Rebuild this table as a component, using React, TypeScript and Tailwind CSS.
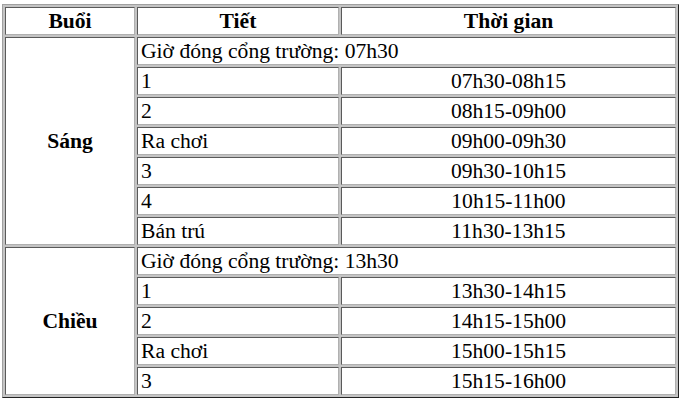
import React from "react";

type Row = { tiet: string; time?: string; note?: boolean };

const sessions: { name: string; rows: Row[] }[] = [
  {
    name: "Sáng",
    rows: [
      { tiet: "Giờ đóng cổng trường: 07h30", note: true },
      { tiet: "1", time: "07h30-08h15" },
      { tiet: "2", time: "08h15-09h00" },
      { tiet: "Ra chơi", time: "09h00-09h30" },
      { tiet: "3", time: "09h30-10h15" },
      { tiet: "4", time: "10h15-11h00" },
      { tiet: "Bán trú", time: "11h30-13h15" },
    ],
  },
  {
    name: "Chiều",
    rows: [
      { tiet: "Giờ đóng cổng trường: 13h30", note: true },
      { tiet: "1", time: "13h30-14h15" },
      { tiet: "2", time: "14h15-15h00" },
      { tiet: "Ra chơi", time: "15h00-15h15" },
      { tiet: "3", time: "15h15-16h00" },
    ],
  },
];

// inset-looking cell border, like an old border="1" table
const cell =
  "border border-t-[#5a5a5a] border-l-[#5a5a5a] border-b-[#b0b0b0] border-r-[#b0b0b0] p-0 h-[28px] leading-[26px]";

export default function App() {
  return (
    <div className="bg-white w-[680px] h-[407px] pt-[4px] pl-[2px] [font-family:Liberation_Serif,serif]">
      <table className="border-separate border-spacing-[2px] w-[677px] table-fixed bg-[#c4c4c4] border border-t-[#a0a0a0] border-l-[#a0a0a0] border-b-[#222] border-r-[#222] text-black text-[21.6px]">
        <colgroup>
          <col className="w-[130px]" />
          <col className="w-[202px]" />
          <col className="w-[335px]" />
        </colgroup>
        <thead>
          <tr>
            <th className={`${cell} bg-white font-bold text-center`}>Buổi</th>
            <th className={`${cell} bg-white font-bold text-center`}>Tiết</th>
            <th className={`${cell} bg-white font-bold text-center`}>Thời gian</th>
          </tr>
        </thead>
        <tbody>
          {sessions.map((s) =>
            s.rows.map((r, i) => (
              <tr key={s.name + i}>
                {i === 0 && (
                  <td
                    rowSpan={s.rows.length}
                    className={`${cell} bg-white font-bold text-center align-middle`}
                  >
                    {s.name}
                  </td>
                )}
                {r.note ? (
                  <td colSpan={2} className={`${cell} bg-white px-[3px] text-left`}>
                    {r.tiet}
                  </td>
                ) : (
                  <>
                    <td className={`${cell} bg-white px-[3px] text-left`}>{r.tiet}</td>
                    <td className={`${cell} bg-white text-center`}>{r.time}</td>
                  </>
                )}
              </tr>
            ))
          )}
        </tbody>
      </table>
    </div>
  );
}
